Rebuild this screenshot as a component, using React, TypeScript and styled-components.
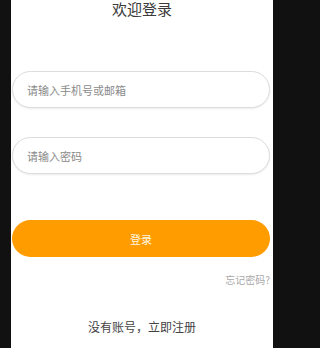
import React from 'react'
import styled, { createGlobalStyle } from 'styled-components'

const GlobalStyle = createGlobalStyle`
    html, body {
        margin: 0;
        padding: 0;
        background: #111111;
        overflow: hidden;
    }
    * {
        box-sizing: border-box;
    }
`

const Screen = styled.div`
    display: flex;
    width: 273px;
    height: 348px;
    font-family: "Noto Sans CJK SC", "Noto Sans", sans-serif;
`

const SideStrip = styled.div`
    width: 11px;
    flex-shrink: 0;
    background: #111111;
`

const Page = styled.div`
    flex: 1;
    display: flex;
    flex-direction: column;
    background: #ffffff;
    padding: 0 3px 0 1px;
    overflow: hidden;
`

const Title = styled.div`
    height: 17px;
    font-size: 15px;
    line-height: 17px;
    color: #3a3a3a;
    text-align: center;
    padding-left: 2px;
`

const Field = styled.input<{ top: number }>`
    display: block;
    width: 100%;
    height: 37px;
    margin-top: ${props => props.top}px;
    padding: 0 0 0 14px;
    border: 1px solid #dcdcdc;
    border-radius: 19px;
    background: #ffffff;
    box-shadow: 0 1px 2px rgba(0, 0, 0, 0.08);
    font-family: inherit;
    font-size: 11px;
    color: #333333;
    outline: none;
    &::placeholder {
        color: #8a8a8a;
    }
`

const LoginButton = styled.button`
    display: block;
    width: 100%;
    height: 37px;
    margin-top: 46px;
    border: none;
    border-radius: 19px;
    background: #ff9c00;
    color: #fff6e0;
    font-family: inherit;
    font-size: 11px;
    cursor: pointer;
`

const Forgot = styled.div`
    margin-top: 16px;
    text-align: right;
    font-size: 10px;
    line-height: 14px;
    color: #a8a8a8;
`

const Register = styled.div`
    margin-top: 32px;
    text-align: center;
    font-size: 12px;
    line-height: 16px;
    color: #444444;
    padding-left: 2px;
`

const App: React.FC = () => (
    <>
        <GlobalStyle />
        <Screen>
            <SideStrip />
            <Page>
                <Title>欢迎登录</Title>
                <Field top={54} type="text" placeholder="请输入手机号或邮箱" />
                <Field top={29} type="password" placeholder="请输入密码" />
                <LoginButton>登录</LoginButton>
                <Forgot>忘记密码?</Forgot>
                <Register>没有账号，立即注册</Register>
            </Page>
        </Screen>
    </>
)

export default App
